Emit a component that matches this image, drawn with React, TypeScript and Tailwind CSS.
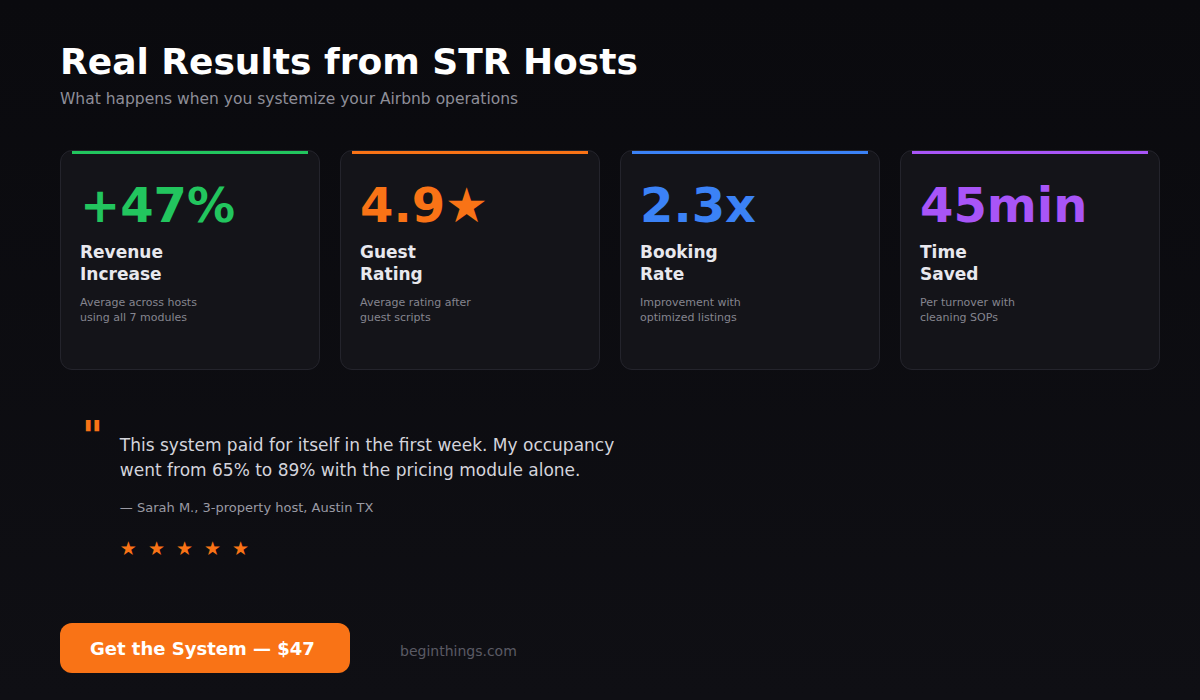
const STATS = [
  { value: "+47%", title: ["Revenue", "Increase"], desc: ["Average across hosts", "using all 7 modules"], color: "text-[#22c55e]", bar: "bg-[#22c55e]" },
  { value: "4.9★", title: ["Guest", "Rating"], desc: ["Average rating after", "guest scripts"], color: "text-[#f97316]", bar: "bg-[#f97316]" },
  { value: "2.3x", title: ["Booking", "Rate"], desc: ["Improvement with", "optimized listings"], color: "text-[#3b82f6]", bar: "bg-[#3b82f6]" },
  { value: "45min", title: ["Time", "Saved"], desc: ["Per turnover with", "cleaning SOPs"], color: "text-[#a855f7]", bar: "bg-[#a855f7]" },
];

export default function App() {
  return (
    <div
      className="flex h-[700px] w-[1200px] flex-col bg-gradient-to-b from-[#0a0a0e] to-[#0f0f14] pl-[60px] pr-[40px] pt-[40px]"
      style={{ fontFamily: '"DejaVu Sans", sans-serif' }}
    >
      <h1 className="text-[36px] font-bold leading-[44px] text-white">Real Results from STR Hosts</h1>
      <p className="mt-[5px] text-[15.5px] leading-[20px] text-[#8e8e98]">What happens when you systemize your Airbnb operations</p>

      <div className="mt-[41px] grid grid-cols-4 gap-[20px]">
        {STATS.map((s) => (
          <div key={s.value} className="relative h-[220px] rounded-[12px] border border-[#24242c] bg-[#141419] px-[19px] pt-[26px]">
            <div className={`absolute left-[11px] right-[11px] top-0 h-[3px] ${s.bar}`} />
            <div className={`text-[48px] font-bold leading-[56px] ${s.color}`}>{s.value}</div>
            <div className="mt-[8px] text-[17px] font-bold leading-[22px] text-[#e8e8ee]">
              {s.title[0]}<br />{s.title[1]}
            </div>
            <div className="mt-[10px] text-[11px] leading-[15px] text-[#85858f]">
              {s.desc[0]}<br />{s.desc[1]}
            </div>
          </div>
        ))}
      </div>

      <div className="mt-[44px] flex gap-[17px] pl-[22px]">
        <div className="h-[20px] text-[40px] font-bold leading-[44px] text-[#f97316]">"</div>
        <div className="pt-[19px]">
          <p className="text-[17px] leading-[25px] text-[#d4d4dc]">
            This system paid for itself in the first week. My occupancy<br />
            went from 65% to 89% with the pricing module alone.
          </p>
          <p className="mt-[16px] text-[13px] leading-[18px] text-[#9a9aa4]">— Sarah M., 3-property host, Austin TX</p>
          <div className="mt-[19px] flex gap-[11px] text-[19px] leading-[24px] text-[#f97316]">
            <span>★</span><span>★</span><span>★</span><span>★</span><span>★</span>
          </div>
        </div>
      </div>

      <div className="mt-[63px] flex items-center gap-[50px]">
        <div className="flex h-[50px] w-[290px] items-center rounded-[12px] bg-[#f97316] px-[30px] text-[18px] font-bold text-white">
          Get the System — $47
        </div>
        <span className="pt-[6px] text-[14px] text-[#5a5a64]">beginthings.com</span>
      </div>
    </div>
  );
}
